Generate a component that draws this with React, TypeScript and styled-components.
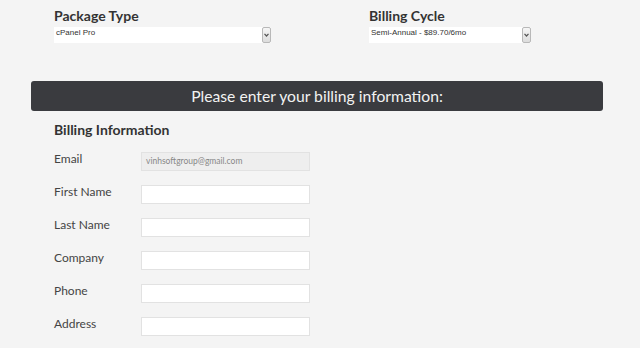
import { createGlobalStyle } from 'styled-components';
import styled from 'styled-components';

const GlobalStyle = createGlobalStyle`
    html, body {
        margin: 0;
        padding: 0;
        background: #f4f4f4;
    }
    * {
        box-sizing: border-box;
    }
`;

const fields = ['First Name', 'Last Name', 'Company', 'Phone', 'Address'];

const Select = ({ value, width }: { value: string; width: number }) => (
    <SelectBox $width={width}>
        <span>{value}</span>
        <ArrowBtn>
            <svg width="5" height="4" viewBox="0 0 5 4">
                <path d="M0.5 0.8 L2.5 3 L4.5 0.8" fill="none" stroke="#555" strokeWidth="1.2" />
            </svg>
        </ArrowBtn>
    </SelectBox>
);

const App = () => {
    return (
        <Page>
            <GlobalStyle />
            <TopRow>
                <PickField>
                    <FieldTitle>Package Type</FieldTitle>
                    <Select value="cPanel Pro" width={217} />
                </PickField>
                <PickField>
                    <FieldTitle>Billing Cycle</FieldTitle>
                    <Select value="Semi-Annual - $89.70/6mo" width={162} />
                </PickField>
            </TopRow>
            <Banner>Please enter your billing information:</Banner>
            <BillingSection>
                <SectionTitle>Billing Information</SectionTitle>
                <FormRows>
                    <FormRow>
                        <Label>Email</Label>
                        <TextInput $disabled>vinhsoftgroup@gmail.com</TextInput>
                    </FormRow>
                    {fields.map((name) => (
                        <FormRow key={name}>
                            <Label>{name}</Label>
                            <TextInput />
                        </FormRow>
                    ))}
                </FormRows>
            </BillingSection>
        </Page>
    );
};

export default App;

const Page = styled.div`
    width: 640px;
    height: 348px;
    overflow: hidden;
    padding: 0 37px 0 31px;
    font-family: Lato, 'Open Sans', sans-serif;
    color: #3a3a3a;
`;

const TopRow = styled.div`
    display: grid;
    grid-template-columns: 315px 1fr;
    padding: 7px 0 0 23px;
`;

const PickField = styled.div`
    display: flex;
    flex-direction: column;
    row-gap: 3px;
`;

const FieldTitle = styled.div`
    font-size: 14px;
    font-weight: 700;
    line-height: 17px;
    color: #333;
`;

const SelectBox = styled.div<{ $width: number }>`
    width: ${(p) => p.$width}px;
    height: 16px;
    background: #fff;
    display: flex;
    align-items: center;
    justify-content: space-between;
    font-family: 'Liberation Sans', Arial, sans-serif;
    font-size: 8px;
    color: #333;
    & > span {
        padding-left: 2px;
        margin-top: -5px;
    }
`;

const ArrowBtn = styled.div`
    width: 9px;
    height: 16px;
    border: 1px solid #b8b8b8;
    border-radius: 2px;
    background: linear-gradient(#f6f6f6, #dcdcdc);
    display: flex;
    align-items: center;
    justify-content: center;
`;

const Banner = styled.div`
    margin-top: 38px;
    height: 30px;
    border-radius: 3px;
    background: #3a3b3f;
    color: #f2f2f2;
    font-size: 15.7px;
    display: flex;
    align-items: center;
    justify-content: center;
`;

const BillingSection = styled.div`
    padding: 10px 0 0 23px;
`;

const SectionTitle = styled.div`
    font-size: 14px;
    font-weight: 700;
    line-height: 18px;
    color: #333;
`;

const FormRows = styled.div`
    margin-top: 13px;
    display: flex;
    flex-direction: column;
    row-gap: 14px;
`;

const FormRow = styled.div`
    display: grid;
    grid-template-columns: 87px 169px;
    align-items: start;
`;

const Label = styled.div`
    font-size: 12px;
    line-height: 14px;
    color: #444;
`;

const TextInput = styled.div<{ $disabled?: boolean }>`
    height: 19px;
    border: 1px solid #e2e2e2;
    background: ${(p) => (p.$disabled ? '#eeeeee' : '#ffffff')};
    color: #888;
    font-size: 8.5px;
    line-height: 17px;
    padding-left: 4px;
`;
